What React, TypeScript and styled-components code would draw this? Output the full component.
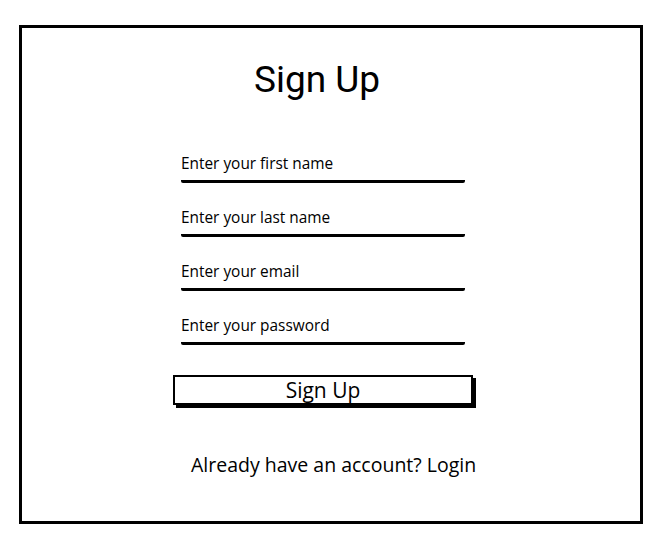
import React from "react";
import styled, { createGlobalStyle } from "styled-components";

const Global = createGlobalStyle`
  html, body { margin: 0; padding: 0; background: #fff; }
  body { font-family: "Open Sans", "Noto Sans", sans-serif; color: #000; }
`;

const Frame = styled.div`
  box-sizing: border-box;
  margin: 25px 0 0 19px;
  width: 624px;
  height: 499px;
  border: 3px solid #000;
  display: flex;
  flex-direction: column;
`;

const Title = styled.h1`
  margin: 30px 0 0 232px;
  font-family: Roboto, "Liberation Sans", sans-serif;
  font-weight: 400;
  font-size: 37px;
  line-height: 44px;
`;

const Form = styled.div`
  margin: 51px 0 0 159px;
  display: flex;
  flex-direction: column;
  gap: 24px;
`;

const Field = styled.div`
  width: 284px;
  height: 30px;
  box-sizing: border-box;
  border-bottom: 3px solid #000;
  border-radius: 0 0 2px 2px;
  font-size: 15.4px;
  line-height: 18px;
  padding: 2px 0 0 0;
`;

const Button = styled.div`
  box-sizing: border-box;
  margin: 30px 0 0 151px;
  width: 300px;
  height: 30px;
  border: 2px solid #000;
  box-shadow: 3px 3px 0 #000;
  display: flex;
  align-items: center;
  justify-content: center;
  font-size: 21px;
`;

const Footer = styled.div`
  margin: 48px 0 0 169px;
  font-size: 19.5px;
  line-height: 24px;
`;

export default function App() {
  return (
    <>
      <Global />
      <Frame>
        <Title>Sign Up</Title>
        <Form>
          <Field>Enter your first name</Field>
          <Field>Enter your last name</Field>
          <Field>Enter your email</Field>
          <Field>Enter your password</Field>
        </Form>
        <Button>Sign Up</Button>
        <Footer>Already have an account? Login</Footer>
      </Frame>
    </>
  );
}
